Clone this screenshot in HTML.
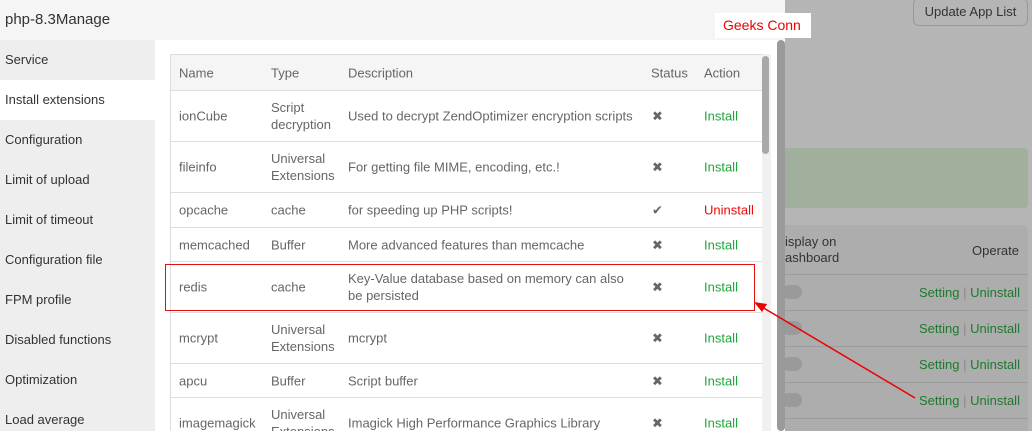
<!DOCTYPE html>
<html style="width:1032px;height:431px;overflow:hidden"><head><style>
*{margin:0;padding:0;box-sizing:border-box}
body{width:1032px;height:431px;overflow:hidden;position:relative;font-family:"Liberation Sans",sans-serif;font-size:13px;color:#666;background:#b5b5b5}
.a{position:absolute}
.title{left:0;top:0;width:785px;height:40px;background:#f5f5f5;font-size:15px;color:#333;padding:11px 5px}
.side{left:0;top:40px;width:155px;height:391px;background:#eee;overflow:hidden}
.side div{height:40px;line-height:40px;padding-left:5px;color:#333;font-size:13px}
.side .on{background:#fff}
.main{left:155px;top:40px;width:630px;height:391px;background:#fff}
.row{position:absolute;left:170px;width:592px;border-bottom:1px solid #ddd;border-left:1px solid #ddd}
.row span{position:absolute;top:50%;transform:translateY(-50%);line-height:17px}
.g{color:#20a53a}.r{color:#ef0808}
#wrap{position:absolute;left:0;top:0;width:1032px;height:431px;overflow:hidden}
</style></head><body><div id="wrap">
<div class="a title">php-8.3Manage</div>
<div class="a side"><div>Service</div><div class="on">Install extensions</div><div>Configuration</div><div>Limit of upload</div><div>Limit of timeout</div><div>Configuration file</div><div>FPM profile</div><div>Disabled functions</div><div>Optimization</div><div>Load average</div></div>
<div class="a main"></div>
<div class="row" style="top:54px;height:37px;background:#f5f5f5;border-top:1px solid #ddd"><span style="left:8px">Name</span><span style="left:100px">Type</span><span style="left:177px">Description</span><span style="left:480px">Status</span><span style="left:533px">Action</span></div>
<div class="row" style="top:91px;height:51px"><span style="left:8px">ionCube</span><span style="left:100px">Script<br>decryption</span><span style="left:177px">Used to decrypt ZendOptimizer encryption scripts</span><span style="left:481px">✖</span><span style="left:533px" class="g">Install</span></div>
<div class="row" style="top:142px;height:51px"><span style="left:8px">fileinfo</span><span style="left:100px">Universal<br>Extensions</span><span style="left:177px">For getting file MIME, encoding, etc.!</span><span style="left:481px">✖</span><span style="left:533px" class="g">Install</span></div>
<div class="row" style="top:193px;height:35px"><span style="left:8px">opcache</span><span style="left:100px">cache</span><span style="left:177px">for speeding up PHP scripts!</span><span style="left:481px">✔</span><span style="left:533px" class="r">Uninstall</span></div>
<div class="row" style="top:228px;height:34px"><span style="left:8px">memcached</span><span style="left:100px">Buffer</span><span style="left:177px">More advanced features than memcache</span><span style="left:481px">✖</span><span style="left:533px" class="g">Install</span></div>
<div class="row" style="top:262px;height:51px"><span style="left:8px">redis</span><span style="left:100px">cache</span><span style="left:177px">Key-Value database based on memory can also<br>be persisted</span><span style="left:481px">✖</span><span style="left:533px" class="g">Install</span></div>
<div class="row" style="top:313px;height:51px"><span style="left:8px">mcrypt</span><span style="left:100px">Universal<br>Extensions</span><span style="left:177px">mcrypt</span><span style="left:481px">✖</span><span style="left:533px" class="g">Install</span></div>
<div class="row" style="top:364px;height:34px"><span style="left:8px">apcu</span><span style="left:100px">Buffer</span><span style="left:177px">Script buffer</span><span style="left:481px">✖</span><span style="left:533px" class="g">Install</span></div>
<div class="row" style="top:398px;height:51px"><span style="left:8px">imagemagick</span><span style="left:100px">Universal<br>Extensions</span><span style="left:177px">Imagick High Performance Graphics Library</span><span style="left:481px">✖</span><span style="left:533px" class="g">Install</span></div>
<div class="a" style="left:762px;top:54px;width:9px;height:377px;background:#f0f0f0"></div>
<div class="a" style="left:762px;top:56px;width:7px;height:98px;background:#a8a8a8;border-radius:4px"></div>
<div class="a" style="left:777px;top:40px;width:8px;height:391px;background:#9a9a9a;border-radius:4px"></div>
<div class="a" style="left:165px;top:264px;width:590px;height:47px;border:1px solid #d11"></div>
<div class="a" style="left:715px;top:13px;width:96px;height:25px;background:#fff;color:#e00;font-size:14px;padding:4px 8px">Geeks Conn</div>
<div class="a" style="left:913px;top:-2px;width:115px;height:28px;border:1px solid #999;border-radius:6px;color:#333;font-size:13px;text-align:center;line-height:26px">Update App List</div>
<div class="a" style="left:785px;top:148px;width:243px;height:60px;background:#a0b09c;border-radius:0 4px 4px 0"></div>
<div class="a" style="left:785px;top:225px;width:243px;height:206px;background:#adadad;border-radius:0 6px 0 0"></div>
<div class="a" style="left:785px;top:234px;color:#333;line-height:16px">isplay on<br>ashboard</div>
<div class="a" style="left:972px;top:243px;color:#333">Operate</div>
<div class="a" style="left:785px;top:274px;width:243px;border-top:1px solid #9c9c9c"></div>
<div class="a" style="left:785px;top:310px;width:243px;border-top:1px solid #9c9c9c"></div>
<div class="a" style="left:785px;top:346px;width:243px;border-top:1px solid #9c9c9c"></div>
<div class="a" style="left:785px;top:382px;width:243px;border-top:1px solid #9c9c9c"></div>
<div class="a" style="left:785px;top:418px;width:243px;border-top:1px solid #9c9c9c"></div>
<div class="a" style="left:919px;top:285px;color:#1d7a2c">Setting <span style="color:#888">|</span> Uninstall</div>
<div class="a" style="left:919px;top:321px;color:#1d7a2c">Setting <span style="color:#888">|</span> Uninstall</div>
<div class="a" style="left:919px;top:357px;color:#1d7a2c">Setting <span style="color:#888">|</span> Uninstall</div>
<div class="a" style="left:919px;top:393px;color:#1d7a2c">Setting <span style="color:#888">|</span> Uninstall</div>
<div class="a" style="left:782px;top:285px;width:20px;height:14px;background:#9a9a9a;border-radius:7px"></div>
<div class="a" style="left:782px;top:321px;width:20px;height:14px;background:#9a9a9a;border-radius:7px"></div>
<div class="a" style="left:782px;top:357px;width:20px;height:14px;background:#9a9a9a;border-radius:7px"></div>
<div class="a" style="left:782px;top:393px;width:20px;height:14px;background:#9a9a9a;border-radius:7px"></div>
<svg class="a" style="left:0;top:0" width="1032" height="431"><line x1="915" y1="398" x2="762" y2="307" stroke="#e00" stroke-width="1.5"/><polygon points="754,302 767,304 762,312" fill="#e00"/></svg>
</div></body></html>
